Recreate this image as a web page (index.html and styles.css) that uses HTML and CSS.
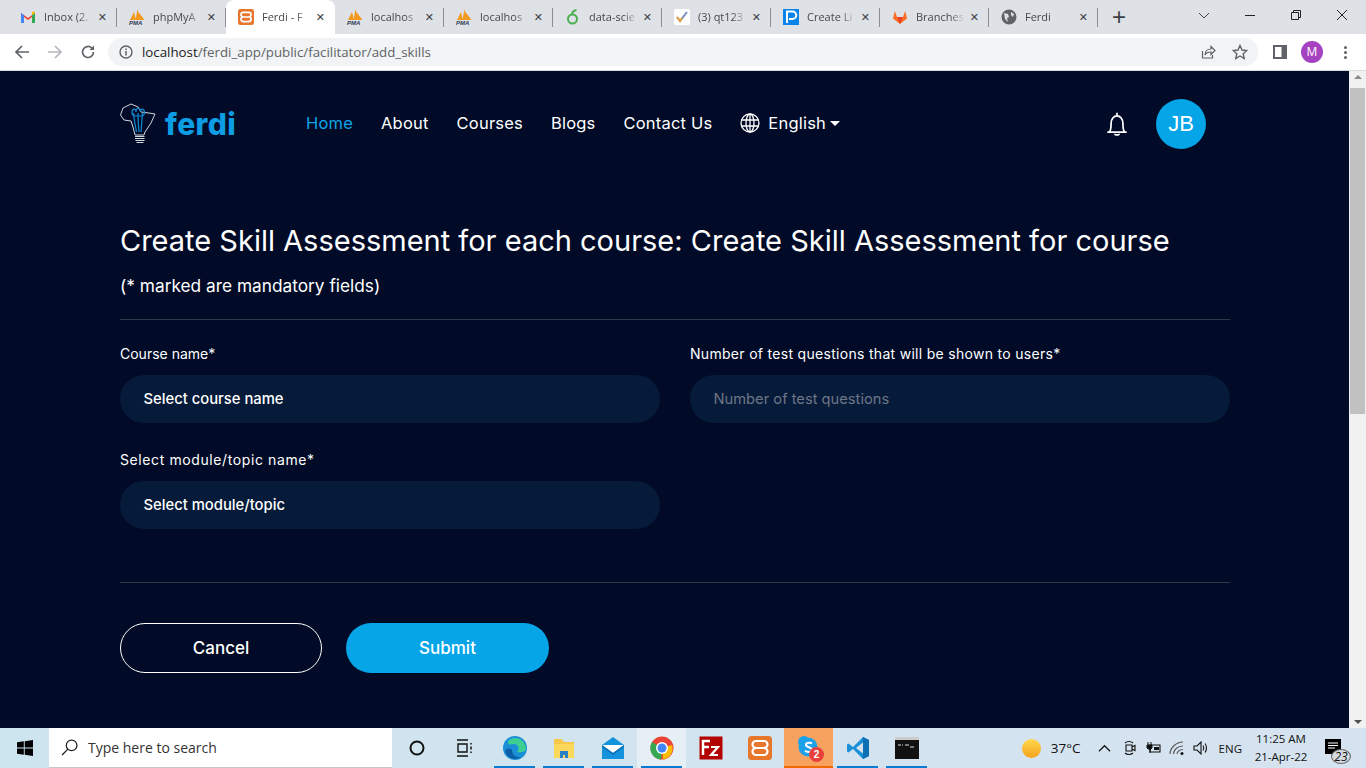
FILE: index.html
```html
<!DOCTYPE html>
<html lang="en">
<head>
<meta charset="utf-8">
<title>Ferdi</title>
<link rel="stylesheet" href="styles.css">
</head>
<body>
<header class="chrome">
  <div class="tabstrip">
    <div class="tab"><svg class="fav" viewBox="0 0 16 16"><path d="M1 14V4l7 5 7-5v10h-3V8L8 11 4 8v6z" fill="#ea4335"/><path d="M1 14V4l3 2.200V14z" fill="#4285f4"/><path d="M15 14V4l-3 2.200V14z" fill="#34a853"/><path d="M12 6.200V3l3-.5V4z" fill="#fbbc04"/></svg><span class="tab-title">Inbox (2.</span><span class="tab-x">✕</span></div>
    <div class="tab"><svg class="fav" viewBox="0 0 16 16"><path d="M1 11 5 3l2 8zM6.500 11 8.500 0l2.500 11zM10 11 9.500 3l6 8z" fill="#f29a1f"/><text x="0" y="16" class="pma">PMA</text></svg><span class="tab-title">phpMyA</span><span class="tab-x">✕</span></div>
    <div class="tab active"><svg class="fav" viewBox="0 0 24 24"><rect width="24" height="24" rx="3.500" fill="#e8772e"/><path d="M8 5h8a3.500 3.500 0 0 1 0 7 3.500 3.500 0 0 1 0 7H8a3.500 3.500 0 0 1 0-7 3.500 3.500 0 0 1 0-7zM8 12h8" fill="none" stroke="#fff" stroke-width="2.600"/></svg><span class="tab-title">Ferdi - F</span><span class="tab-x">✕</span></div>
    <div class="tab"><svg class="fav" viewBox="0 0 16 16"><path d="M1 11 5 3l2 8zM6.500 11 8.500 0l2.500 11zM10 11 9.500 3l6 8z" fill="#f29a1f"/><text x="0" y="16" class="pma">PMA</text></svg><span class="tab-title">localhos</span><span class="tab-x">✕</span></div>
    <div class="tab"><svg class="fav" viewBox="0 0 16 16"><path d="M1 11 5 3l2 8zM6.500 11 8.500 0l2.500 11zM10 11 9.500 3l6 8z" fill="#f29a1f"/><text x="0" y="16" class="pma">PMA</text></svg><span class="tab-title">localhos</span><span class="tab-x">✕</span></div>
    <div class="tab"><svg class="fav" viewBox="0 0 16 16"><circle cx="7.500" cy="10" r="4.500" fill="none" stroke="#4caf50" stroke-width="2"/><path d="M7 6c0-2.500 2-4.500 4.500-5" fill="none" stroke="#4caf50" stroke-width="2"/></svg><span class="tab-title">data-scie</span><span class="tab-x">✕</span></div>
    <div class="tab"><svg class="fav" viewBox="0 0 16 16"><rect width="16" height="16" rx="2" fill="#fff"/><path d="m3 8 3 4 7-9" fill="none" stroke="#7a8fc0" stroke-width="2"/><path d="m3 8 3 4 2-3" fill="none" stroke="#e8a33c" stroke-width="2"/></svg><span class="tab-title">(3) qt123</span><span class="tab-x">✕</span></div>
    <div class="tab"><svg class="fav" viewBox="0 0 16 16"><rect width="16" height="16" fill="#0a84e8"/><path d="M4 14V2.500h5.500a3.500 3.500 0 0 1 0 7.500H6" fill="none" stroke="#fff" stroke-width="2"/></svg><span class="tab-title">Create Li</span><span class="tab-x">✕</span></div>
    <div class="tab"><svg class="fav" viewBox="0 0 16 16"><path d="M8 15 1 9.500 2.800 2 5 8h6l2.200-6L15 9.500z" fill="#fc6d26"/><path d="M8 15 5 8h6z" fill="#e24329"/></svg><span class="tab-title">Branches</span><span class="tab-x">✕</span></div>
    <div class="tab"><svg class="fav" viewBox="0 0 16 16"><circle cx="8" cy="8" r="7.500" fill="#5f6368"/><path d="M3 4l4 1 1 3-2 1 1 4-3-3zM10 3l3 2-1 3-2-2z" fill="#dee1e6"/></svg><span class="tab-title">Ferdi</span><span class="tab-x">✕</span></div>
    <div class="newtab">+</div>
    <div class="winctl">
      <svg class="wc" viewBox="0 0 12 12"><path d="m1 4 5 5 5-5" fill="none" stroke="#444" stroke-width="1"/></svg>
      <svg class="wc" viewBox="0 0 12 12"><path d="M1 6.500h10" stroke="#222" stroke-width="1"/></svg>
      <svg class="wc" viewBox="0 0 12 12"><path d="M1.500 3.500h7v7h-7zM3.500 3.500v-2h7v7h-2" fill="none" stroke="#222" stroke-width="1"/></svg>
      <svg class="wc" viewBox="0 0 12 12"><path d="m1 1 10 10M11 1 1 11" stroke="#222" stroke-width="1"/></svg>
    </div>
  </div>
  <div class="toolbar">
    <svg class="tb" viewBox="0 0 16 16"><path d="M15 8H2M8 2 2 8l6 6" fill="none" stroke="#5f6368" stroke-width="1.700"/></svg>
    <svg class="tb" viewBox="0 0 16 16"><path d="M1 8h13M8 2l6 6-6 6" fill="none" stroke="#b4b7bb" stroke-width="1.700"/></svg>
    <svg class="tb" viewBox="0 0 16 16"><path d="M13.500 8A5.500 5.500 0 1 1 11.800 4" fill="none" stroke="#5f6368" stroke-width="1.700"/><path d="M14 1.500V6H9.500z" fill="#5f6368"/></svg>
    <div class="omnibox">
      <svg class="info" viewBox="0 0 14 14"><circle cx="7" cy="7" r="6" fill="none" stroke="#5f6368" stroke-width="1.400"/><path d="M7 6v4.500M7 3.500v1.500" stroke="#5f6368" stroke-width="1.500"/></svg>
      <span class="url"><span class="host">localhost</span>/ferdi_app/public/facilitator/add_skills</span>
      <svg class="omni-ic" viewBox="0 0 16 16"><path d="M2.500 7v7h10v-3" fill="none" stroke="#5f6368" stroke-width="1.200"/><path d="M5 11c0-4 3-6 6-6V2.500L15 6.500l-4 4V8c-3 0-5 1-6 3z" fill="none" stroke="#5f6368" stroke-width="1.200"/></svg>
      <svg class="omni-ic" viewBox="0 0 16 16"><path d="m8 1.500 2 4.500 4.800.5-3.600 3.200 1 4.800L8 12l-4.200 2.500 1-4.800L1.200 6.500 6 6z" fill="none" stroke="#5f6368" stroke-width="1.400"/></svg>
    </div>
    <svg class="panel" viewBox="0 0 14 14"><path d="M1 1h12v12H1z" fill="none" stroke="#5f6368" stroke-width="2"/><path d="M8.500 1H13v12H8.500z" fill="#5f6368"/></svg>
    <span class="profile">M</span>
    <span class="kebab"><i></i><i></i><i></i></span>
  </div>
</header>

<div class="viewport">
  <main class="page">
    <nav class="nav">
      <a class="brand" href="#">
        <svg class="bulb" viewBox="0 0 36 42">
          <path d="M0.500 12 3 5 11 1 18 4 21 9 29 10 35 11 31 20 25 29 24 32H15L13 24 11 18 4 17z" fill="none" stroke="#cfd5dd" stroke-width="1"/>
          <path d="M13.500 10c.5 7 2 13 3 19M18 10c0 7 .5 13 1 19M22.500 10c-.5 7-1 13-1.500 19" fill="none" stroke="#0f8ad6" stroke-width="1.200"/>
          <path d="M12 10c0-5 4-5 4-1 0-5 4.500-5 4.500 0 0-4 4-4 4 1 0 2-2 3-3 3H15c-1 0-3-1-3-3z" fill="none" stroke="#0f8ad6" stroke-width="1.200"/>
          <path d="M15 33.500h9.500M15 35.500h9.500M15.500 37.500h9M16.500 39.500h7" stroke="#cfd5dd" stroke-width="1.200"/>
        </svg>
        <span class="brand-name">ferdi</span>
      </a>
      <ul class="menu">
        <li class="menu-item current">Home</li>
        <li class="menu-item">About</li>
        <li class="menu-item">Courses</li>
        <li class="menu-item">Blogs</li>
        <li class="menu-item">Contact Us</li>
        <li class="menu-item lang">
          <svg class="globe" viewBox="0 0 20 20"><g fill="none" stroke="#fff" stroke-width="1.300"><circle cx="10" cy="10" r="9"/><ellipse cx="10" cy="10" rx="4" ry="9"/><path d="M10 1v18M1.500 7h17M1.500 13h17"/></g></svg>
          <span>English</span><span class="caret"></span>
        </li>
      </ul>
      <svg class="bell" viewBox="0 0 24 26"><path d="M3 20.500h18M5 20.500c1.500-2 1.500-4 1.500-8 0-4 2.500-7 5.500-7s5.500 3 5.500 7c0 4 0 6 1.500 8M12 2.500v3M10 22c0 1.500 4 1.500 4 0" fill="none" stroke="#fff" stroke-width="1.600"/></svg>
      <span class="avatar">JB</span>
    </nav>

    <h1 class="title">Create Skill Assessment for each course: Create Skill Assessment for course</h1>
    <p class="note">(* marked are mandatory fields)</p>
    <form class="form">
      <div class="grid">
        <div class="field">
          <label class="label">Course name*</label>
          <div class="input select">Select course name</div>
        </div>
        <div class="field">
          <label class="label label-long">Number of test questions that will be shown to users*</label>
          <div class="input placeholder">Number of test questions</div>
        </div>
        <div class="field">
          <label class="label label-mod">Select module/topic name*</label>
          <div class="input select">Select module/topic</div>
        </div>
      </div>
      <div class="actions">
        <button class="btn cancel" type="button">Cancel</button>
        <button class="btn submit" type="button">Submit</button>
      </div>
    </form>
  </main>
  <aside class="scrollbar">
    <span class="arrow up"></span>
    <span class="thumb"></span>
    <span class="arrow down"></span>
  </aside>
</div>

<footer class="taskbar">
  <svg class="start" viewBox="0 0 16 16"><path d="M0 2.300 6.800 1.300V7.500H0zM7.700 1.200 16 0v7.500H7.700zM0 8.400h6.800v6.300L0 13.700zM7.700 8.400H16V16l-8.300-1.200z" fill="#000"/></svg>
  <div class="search">
    <svg class="lens" viewBox="0 0 16 16"><circle cx="10" cy="6" r="5" fill="none" stroke="#222" stroke-width="1.200"/><path d="M6.500 9.500 1 15" stroke="#222" stroke-width="1.200"/></svg>
    <span>Type here to search</span>
  </div>
  <div class="tasks">
    <span class="task"><svg class="cortana" viewBox="0 0 16 16"><circle cx="8" cy="8" r="6.500" fill="none" stroke="#111" stroke-width="2"/></svg></span>
    <span class="task"><svg class="taskview" viewBox="0 0 18 18"><path d="M0 1h11M0 17h11M1 5h9v8H1z" fill="none" stroke="#111" stroke-width="1.400"/><path d="M14 4v1.500M14 7.500v3M14 12.500v1.500" stroke="#111" stroke-width="1.500"/></svg></span>
    <span class="task run"><svg class="app" viewBox="0 0 24 24"><circle cx="12" cy="12" r="12" fill="#1a8fd6"/><path d="M5 5c6-6 16-3 18 6 1 5-5 6-9 5 3-3 1-8-3-8S5 10 5 5z" fill="#3ccf91"/><path d="M9 14c0 5 4 8 9 7-3 3-14 3-16-6 1-2 5-4 7-1z" fill="#0d5ea8"/></svg></span>
    <span class="task run"><svg class="app" viewBox="0 0 24 24"><path d="M2 3h8l2 3h10v16H2z" fill="#f5c84c"/><rect x="2" y="8" width="20" height="14" fill="#fbd75b"/><path d="M8 22v-7h8v7h-3v-3h-2v3z" fill="#2a7fc9"/></svg></span>
    <span class="task run"><svg class="app" viewBox="0 0 24 24"><path d="M1 9 12 1l11 8v14H1z" fill="#1593dc"/><path d="M1 9h22l-11 8z" fill="#fff"/><path d="m1 9 11 8 11-8v2l-11 8-11-8z" fill="#0c70b8"/></svg></span>
    <span class="task run hover"><svg class="app" viewBox="0 0 24 24"><circle cx="12" cy="12" r="11.500" fill="#ea4335"/><path d="M12 12 22 9a11 11 0 0 1-9 14.500z" fill="#fbbc04"/><path d="M12 12l-1 11.500A11.500 11.500 0 0 1 2 6z" fill="#34a853"/><circle cx="12" cy="12" r="6" fill="#fff"/><circle cx="12" cy="12" r="4.500" fill="#4285f4"/></svg></span>
    <span class="task"><svg class="app" viewBox="0 0 24 24"><rect x="0.500" y="0.500" width="23" height="23" fill="#b30000"/><path d="M4 19V5h7M4 11h6" fill="none" stroke="#fff" stroke-width="2.500"/><path d="M12 11h7l-7 8h7" fill="none" stroke="#fff" stroke-width="2.200"/></svg></span>
    <span class="task"><svg class="app" viewBox="0 0 24 24"><rect width="24" height="24" rx="3.500" fill="#e8772e"/><path d="M8 5h8a3.500 3.500 0 0 1 0 7 3.500 3.500 0 0 1 0 7H8a3.500 3.500 0 0 1 0-7 3.500 3.500 0 0 1 0-7zM8 12h8" fill="none" stroke="#fff" stroke-width="2.200"/></svg></span>
    <span class="task run skype"><svg class="app" viewBox="0 0 24 24"><circle cx="7" cy="6" r="6" fill="#1da1e8"/><circle cx="11" cy="11" r="9.500" fill="#1da1e8"/><circle cx="15" cy="16" r="5" fill="#1da1e8"/><path d="M15 7.500c-2-1.500-6-1-6 1.500s6 2 6 4.700-5 2.800-7 1" fill="none" stroke="#fff" stroke-width="2"/></svg><b class="badge">2</b></span>
    <span class="task run"><svg class="app" viewBox="0 0 24 24"><path d="M17 1 7 11 2.500 7.500 1 8.500v7l1.500 1L7 13l10 10 6-3V4z" fill="#1a8fd8"/><path d="M17 6.500 10 12l7 5.500z" fill="#d5e3ee"/><path d="M17 1l6 3v16l-6 3z" fill="#0e6fb5"/></svg></span>
    <span class="task run"><svg class="app" viewBox="0 0 24 24"><rect y="1" width="24" height="22" fill="#111"/><rect y="1" width="24" height="3" fill="#ccc"/><path d="M3 9h3M7 9h1M10 9h4M15 11h4" stroke="#ddd" stroke-width="1.200"/></svg></span>
  </div>
  <div class="tray">
    <span class="sun"></span>
    <span class="temp">37°C</span>
    <svg class="tray-ic chev" viewBox="0 0 14 14"><path d="m1 10 6-6 6 6" fill="none" stroke="#111" stroke-width="1.300"/></svg>
    <svg class="tray-ic" viewBox="0 0 16 16"><path d="M5 5h6v6H5zM11 7l3-1.500v5L11 9M4 3c2-2 6-2 8 0M4 13c2 2 6 2 8 0" fill="none" stroke="#111" stroke-width="1.100"/></svg>
    <svg class="tray-ic" viewBox="0 0 16 16"><path d="M5 5h10v7H5z" fill="none" stroke="#111" stroke-width="1.100"/><path d="M2 5h5v3L5 10 2 8zM3 2v3M6 2v3M5 10v3" fill="#111" stroke="#111"/><path d="M9 7h5v3H9z" fill="#111"/></svg>
    <svg class="tray-ic" viewBox="0 0 16 16"><path d="M1 14C1 8 7 2 14 2M4.500 14c0-4 4-8 9.500-8M8 14c0-2 2.500-4.500 6-4.500" fill="none" stroke="#555" stroke-width="1.100"/><circle cx="13" cy="13.500" r="1.500" fill="#111"/></svg>
    <svg class="tray-ic" viewBox="0 0 16 16"><path d="M1 6h3l4-4v12l-4-4H1z" fill="none" stroke="#111" stroke-width="1.100"/><path d="M10 5.500c1 1.500 1 3.500 0 5M12 3.500c2 2.500 2 6.500 0 9" fill="none" stroke="#111" stroke-width="1.100"/></svg>
    <span class="eng">ENG</span>
    <span class="clock"><span>11:25 AM</span><span>21-Apr-22</span></span>
    <span class="notify">
      <svg class="note-ic" viewBox="0 0 16 15"><path d="M0 0h16v15H0z" fill="#000"/><path d="M3 4h10M3 6.500h10M3 9h7" stroke="#fff" stroke-width="1"/></svg>
      <b class="note-count">23</b>
    </span>
  </div>
</footer>
</body>
</html>
```
FILE: styles.css
```css
* { box-sizing: border-box; }
html, body { margin: 0; height: 100%; overflow: hidden; }
body {
  width: 1366px;
  height: 768px;
  display: flex;
  flex-direction: column;
  font-family: "Inter", "Liberation Sans", sans-serif;
  background: #010b27;
}

/* browser chrome */
.chrome { flex: none; height: 71px; background: #fff; border-bottom: 1px solid #d9dcdf; }
.tabstrip { height: 34px; background: #dee1e6; display: flex; align-items: center; padding-left: 8px; font-family: "Open Sans", sans-serif; }
.tab { width: 109px; height: 34px; display: flex; align-items: center; padding: 0 10px 0 12px; position: relative; }
.tab::after { content: ""; position: absolute; right: 0; top: 8px; height: 19px; width: 1px; background: #8a8d91; }
.tab.active { background: #fff; border-radius: 8px 8px 0 0; }
.tab.active::after { display: none; }
.fav { width: 16px; height: 16px; flex: none; margin-right: 8px; overflow: visible; }
.pma { font: italic bold 6px "Liberation Sans", sans-serif; fill: #2d3a55; }
.tab-title {
  flex: 1;
  font-size: 11px;
  color: #45484d;
  white-space: nowrap;
  overflow: hidden;
  margin-bottom: 2px;
  -webkit-mask-image: linear-gradient(90deg, #000 70%, transparent 100%);
  mask-image: linear-gradient(90deg, #000 70%, transparent 100%);
}
.tab-x { width: 14px; font-size: 11px; font-weight: 700; color: #3c4043; text-align: right; font-family: "DejaVu Sans", sans-serif; }
.newtab { width: 42px; text-align: center; font: 400 24px/34px "Liberation Sans", sans-serif; color: #3c4043; }
.winctl { margin-left: auto; display: flex; padding-right: 1px; }
.wc { width: 12px; height: 12px; margin: -4px 17px 0; }

.toolbar { height: 36px; display: flex; align-items: center; padding-left: 14px; }
.tb { width: 16px; height: 16px; margin-right: 17px; }
.omnibox { width: 1150px; height: 28px; margin-left: -5px; background: #f1f3f4; border-radius: 14px; display: flex; align-items: center; padding: 0 10px 0 11px; }
.info { width: 14px; height: 14px; margin-right: 9px; }
.url { flex: 1; font: 400 13.300px "Open Sans", sans-serif; color: #5f6368; }
.host { color: #202124; }
.omni-ic { width: 16px; height: 16px; margin-left: 16px; }
.panel { width: 14px; height: 14px; margin-left: 15px; }
.profile { width: 22px; height: 22px; margin-left: 14px; border-radius: 50%; background: #a542c0; color: #fff; font: 400 12px/22px "Open Sans", sans-serif; text-align: center; }
.kebab { margin-left: 21px; display: flex; flex-direction: column; gap: 2px; }
.kebab i { width: 3px; height: 3px; border-radius: 50%; background: #5f6368; }

/* page */
.viewport { flex: 1; min-height: 0; display: flex; }
.page { flex: 1; padding: 0 119px 0 120px; color: #fff; min-width: 0; }
.nav { height: 106px; display: flex; align-items: center; }
.brand { display: flex; align-items: center; text-decoration: none; width: 186px; }
.bulb { width: 36px; height: 42px; margin-right: 9px; }
.brand-name { font-size: 30px; font-weight: 800; letter-spacing: 0.4px; color: #0d9de4; }
.menu { list-style: none; display: flex; align-items: center; gap: 28px; margin: -2px 0 0; padding: 0; flex: 1; }
.menu-item { font-size: 16.500px; letter-spacing: 0.2px; color: #fff; }
.menu-item.current { color: #0ea5e9; }
.lang { display: flex; align-items: center; }
.globe { width: 20px; height: 20px; margin-right: 8px; }
.caret { border: 5px solid transparent; border-top-color: #fff; border-bottom: 0; margin-left: 4px; }
.bell { width: 26px; height: 28px; margin-right: 26px; }
.avatar { width: 50px; height: 50px; margin-right: 24px; border-radius: 50%; background: #05a5e8; font: 400 22px/50px "Liberation Sans", sans-serif; text-align: center; }

.title { margin: 45px 0 0; font-size: 29px; line-height: 38px; font-weight: 400; }
.note { margin: 13px 0 0; font-size: 17.300px; line-height: 26px; padding-bottom: 20px; border-bottom: 1px solid #2f3849; }
.form { display: block; }
.grid { display: grid; grid-template-columns: 540px 540px; column-gap: 30px; row-gap: 26px; padding: 23px 0 53px; border-bottom: 1px solid #2f3849; }
.field { display: flex; flex-direction: column; }
.label { font-size: 14px; line-height: 21px; margin-bottom: 11px; }
.label-long { letter-spacing: 0.3px; }
.label-mod { letter-spacing: 0.6px; }
.input { height: 48px; border-radius: 24px; background: #061a3a; padding: 0 23.500px 1px; display: flex; align-items: center; }
.select { color: #fff; font-size: 14.800px; font-weight: 500; }
.placeholder { color: #6d7686; font-size: 14.700px; }
.actions { display: flex; gap: 24px; padding-top: 40px; }
.btn { height: 50px; border-radius: 25px; font: 500 17px "Inter", sans-serif; color: #fff; cursor: pointer; }
.cancel { width: 202px; background: transparent; border: 1px solid #fff; }
.submit { width: 203px; background: #05a5e8; border: 0; }

.scrollbar { width: 17px; background: #f1f1f1; display: flex; flex-direction: column; align-items: center; padding-top: 4px; }
.thumb { width: 15px; height: 326px; margin-top: 9px; background: #c1c1c1; }
.arrow { border: 4px solid transparent; }
.arrow.up { border-bottom-color: #8a8a8a; border-top: 0; }
.arrow.down { margin-top: auto; margin-bottom: 4px; border-top-color: #505050; border-bottom: 0; }

/* taskbar */
.taskbar { flex: none; height: 40px; display: flex; align-items: stretch; background: linear-gradient(90deg, #cde5ee, #d6e3f0); font-family: "Open Sans", sans-serif; color: #111; }
.start { width: 16px; height: 16px; margin: 12px 16px 0 17px; }
.search { width: 343px; background: #fff; border-bottom: 1px solid #c4c8cc; display: flex; align-items: center; gap: 10px; padding-left: 12px; font-size: 14px; color: #333; }
.lens { width: 17px; height: 17px; }
.tasks { display: flex; }
.task { width: 49px; display: flex; align-items: center; justify-content: center; position: relative; }
.run::after { content: ""; position: absolute; left: 4px; right: 4px; bottom: 0; height: 2px; background: #0a7bd0; }
.hover { background: #e6eff5; }
.skype { background: #f7a35f; }
.skype::after { left: 0; right: 0; background: #f06a00; }
.app { width: 24px; height: 24px; }
.cortana { width: 16px; height: 16px; }
.taskview { width: 18px; height: 18px; }
.badge { position: absolute; left: 25px; top: 19px; width: 15px; height: 15px; border-radius: 50%; background: #e8403a; color: #fff; font: 700 10px/15px "Liberation Sans", sans-serif; text-align: center; }
.tray { margin-left: auto; display: flex; align-items: center; padding-right: 17px; }
.sun { width: 19px; height: 19px; border-radius: 50%; background: linear-gradient(#ffd84d, #f5a21c); margin-right: 10px; }
.temp { font-size: 13.500px; margin-right: 17px; }
.tray-ic { width: 16px; height: 16px; margin-right: 8px; }
.chev { width: 13px; height: 13px; margin-right: 10px; }
.eng { font-size: 11.500px; margin: 0 9px 0 2px; }
.clock { display: flex; flex-direction: column; align-items: center; gap: 2px; font-size: 11.500px; line-height: 16px; width: 60px; }
.notify { position: relative; width: 24px; height: 24px; margin-left: 14px; }
.note-ic { width: 16px; height: 15px; position: absolute; left: 0; top: 3px; }
.note-count { position: absolute; left: 6px; top: 13px; width: 20px; height: 15px; border-radius: 50%; border: 1px solid #666; background: #d5dbe0; font: italic 400 12px/13px "Open Sans", sans-serif; text-align: center; }
```
